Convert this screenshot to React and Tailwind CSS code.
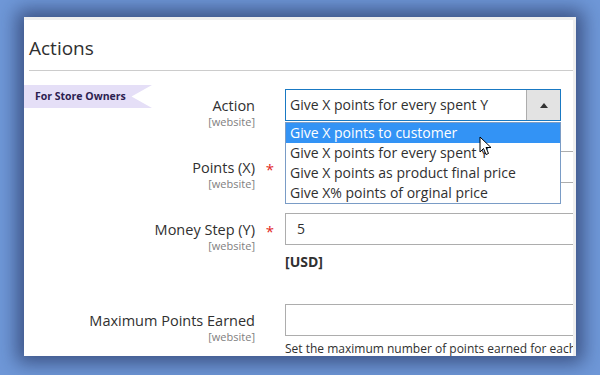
import React from 'react';

const options = [
  'Give X points to customer',
  'Give X points for every spent Y',
  'Give X points as product final price',
  'Give X% points of orginal price',
];

function Label({ text, required }) {
  return (
    <>
      <div className="w-[231px] shrink-0 text-right pt-[7px]">
        <div className="text-[14.5px] leading-[20px] text-[#303030]">{text}</div>
        <div className="text-[11px] leading-[12px] text-[#808080]">[website]</div>
      </div>
      <div className="w-[30px] shrink-0 text-center pt-[8px] text-[15px] leading-[20px] text-[#e22626]">
        {required ? '*' : ''}
      </div>
    </>
  );
}

function Cursor() {
  return (
    <svg className="absolute left-[193px] top-[13px]" width="14" height="21" viewBox="0 0 14 21">
      <path
        d="M1 1 L1 16 L4.5 12.5 L7 18.5 L9.5 17.5 L7 11.5 L12 11.5 Z"
        fill="#fff"
        stroke="#000"
        strokeWidth="1"
        strokeLinejoin="round"
      />
    </svg>
  );
}

export default function App() {
  return (
    <div
      className="w-[600px] h-[375px] overflow-hidden bg-[#6f98d8] pt-[17px]"
      style={{ fontFamily: '"Open Sans", "Noto Sans", sans-serif' }}
    >
      <div className="relative w-[552px] h-[339px] ml-[24px] bg-white overflow-hidden border-t-[3px] border-r-[3px] border-[#efefef] shadow-[0_0_18px_7px_rgba(25,35,75,0.6)]">
        <div className="ml-[5px] pt-[16px] pb-[10px] border-b border-[#cccccc]">
          <h2 className="text-[19px] leading-[24px] text-[#303030]">Actions</h2>
        </div>

        {/* Action */}
        <div className="flex mt-[18px]">
          <div className="relative w-[231px] shrink-0 text-right pt-[7px]">
            <div className="absolute left-0 top-[-4px] w-[128px] h-[23px] bg-[#e5dff7] [clip-path:polygon(0_0,100%_0,84%_50%,100%_100%,0_100%)] pl-[11px] text-[10.5px] leading-[23px] font-bold text-[#2b2150] text-left">
              For Store Owners
            </div>
            <div className="text-[14.5px] leading-[20px] text-[#303030]">Action</div>
            <div className="text-[11px] leading-[12px] text-[#808080]">[website]</div>
          </div>
          <div className="w-[30px] shrink-0" />
          <div className="relative z-10 w-[276px] shrink-0">
            <div className="flex h-[32px] border border-[#1979c3] bg-white">
              <div className="flex-1 pl-[4px] text-[14px] leading-[30px] text-[#303030]">
                Give X points for every spent Y
              </div>
              <div className="w-[34px] flex items-center justify-center bg-[#e3e3e3] border-l border-[#adadad]">
                <span className="w-0 h-0 border-l-[4px] border-r-[4px] border-b-[5px] border-l-transparent border-r-transparent border-b-[#333]" />
              </div>
            </div>
            <div className="absolute left-0 top-[33px] w-[276px] border border-[#7a9cc6] bg-white">
              {options.map((o, i) => (
                <div
                  key={o}
                  className={
                    i === 0
                      ? 'h-[20px] pl-[4px] text-[14px] leading-[20px] bg-[#3393f5] text-white'
                      : 'h-[20px] pl-[4px] text-[14px] leading-[20px] text-[#303030]'
                  }
                >
                  {o}
                </div>
              ))}
              <Cursor />
            </div>
          </div>
        </div>

        {/* Points (X) */}
        <div className="flex mt-[23px]">
          <Label text="Points (X)" required />
          <div className="w-[320px] h-[32px] shrink-0 border border-[#adadad]" />
        </div>

        {/* Money Step (Y) */}
        <div className="flex mt-[23px]">
          <Label text="Money Step (Y)" required />
          <div className="shrink-0">
            <div className="w-[320px] h-[32px] border border-[#adadad] pl-[11px] text-[14px] leading-[30px] text-[#303030]">
              5
            </div>
            <div className="mt-[7px] text-[14px] leading-[20px] font-bold text-[#303030]">[USD]</div>
          </div>
        </div>

        {/* Maximum Points Earned */}
        <div className="flex mt-[32px]">
          <Label text="Maximum Points Earned" />
          <div className="shrink-0">
            <div className="w-[320px] h-[32px] border border-[#adadad]" />
            <div className="mt-[5px] text-[12px] leading-[16px] text-[#303030] whitespace-nowrap">
              Set the maximum number of points earned for each order
            </div>
          </div>
        </div>
      </div>
    </div>
  );
}
